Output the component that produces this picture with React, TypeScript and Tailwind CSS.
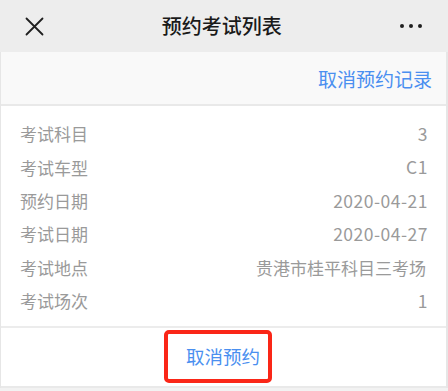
const rows: [string, string][] = [
  ['考试科目', '3'],
  ['考试车型', 'C1'],
  ['预约日期', '2020-04-21'],
  ['考试日期', '2020-04-27'],
  ['考试地点', '贵港市桂平科目三考场'],
  ['考试场次', '1'],
];

export default function App() {
  return (
    <div
      className="w-[448px] h-[391px] overflow-hidden bg-[#f2f2f2] flex flex-col"
      style={{ fontFamily: '"Noto Sans CJK SC", "Noto Sans", sans-serif' }}
    >
      {/* top bar */}
      <div className="h-[52px] shrink-0 bg-[#ededed] flex items-center px-[25px]">
        <svg width="19" height="19" viewBox="0 0 19 19" className="text-[#1f1f1f]">
          <path d="M1.5 1.5 L17.5 17.5 M17.5 1.5 L1.5 17.5" stroke="currentColor" strokeWidth="1.8" strokeLinecap="round" />
        </svg>
        <div className="flex-1 text-center text-[20px] font-medium text-[#1a1a1a] leading-none">预约考试列表</div>
        <div className="flex items-center gap-[4.5px] mr-[1px]">
          <span className="w-[4.5px] h-[4.5px] rounded-full bg-[#1f1f1f]" />
          <span className="w-[4.5px] h-[4.5px] rounded-full bg-[#1f1f1f]" />
          <span className="w-[4.5px] h-[4.5px] rounded-full bg-[#1f1f1f]" />
        </div>
      </div>

      {/* main card */}
      <div className="shrink-0 flex flex-col border-l border-r-2 border-[#e6e6e6] bg-white">
        <div className="h-[54px] shrink-0 bg-[#f9f9f9] border-b-2 border-[#e9e9e9] flex items-center justify-end pr-[14px]">
          <span className="text-[19px] text-[#4a8ff0] leading-none">取消预约记录</span>
        </div>

        <div className="h-[222px] shrink-0 flex flex-col pt-[11px] px-[19px] border-b-2 border-[#ececec]">
          {rows.map(([k, v]) => (
            <div key={k} className="h-[33.4px] flex items-center justify-between text-[17px] text-[#9a9a9a] leading-none">
              <span>{k}</span>
              {/^[\x00-\x7f]+$/.test(v) ? (
                <span className="tracking-[0.5px] text-[17.5px] -mr-[1px]">{v}</span>
              ) : (
                <span className="mr-[1px]">{v}</span>
              )}
            </div>
          ))}
        </div>

        <div className="h-[60px] shrink-0 flex items-start justify-center pt-[2px] border-b-2 border-[#e9e9e9]">
          <div className="w-[108px] h-[53px] mr-[11px] border-[4px] border-[#fa2617] rounded-[5px] flex items-center justify-end pr-[8px]">
            <span className="text-[18.5px] text-[#4a8ff0] leading-none">取消预约</span>
          </div>
        </div>
      </div>
    </div>
  );
}
